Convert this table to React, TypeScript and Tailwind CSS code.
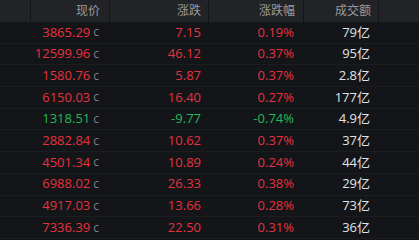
const rows = [
  { price: "3865.29", chg: "7.15", pct: "0.19%", vol: "79亿", up: true },
  { price: "12599.96", chg: "46.12", pct: "0.37%", vol: "95亿", up: true },
  { price: "1580.76", chg: "5.87", pct: "0.37%", vol: "2.8亿", up: true },
  { price: "6150.03", chg: "16.40", pct: "0.27%", vol: "177亿", up: true },
  { price: "1318.51", chg: "-9.77", pct: "-0.74%", vol: "4.9亿", up: false },
  { price: "2882.84", chg: "10.62", pct: "0.37%", vol: "37亿", up: true },
  { price: "4501.34", chg: "10.89", pct: "0.24%", vol: "44亿", up: true },
  { price: "6988.02", chg: "26.33", pct: "0.38%", vol: "29亿", up: true },
  { price: "4917.03", chg: "13.66", pct: "0.28%", vol: "73亿", up: true },
  { price: "7336.39", chg: "22.50", pct: "0.31%", vol: "36亿", up: true },
];

const cols = "grid grid-cols-[30px_79px_99px_95px_75px_1fr]";

export default function App() {
  return (
    <div
      className="w-[419px] h-[240px] overflow-hidden bg-[#131519] text-[13px]"
      style={{ fontFamily: '"Open Sans", "Noto Sans CJK SC", sans-serif' }}
    >
      {/* Header */}
      <div className={`${cols} h-[22px] bg-[#222327] text-[12px] text-[#9a9b9f]`}>
        <div />
        <div className="flex items-center justify-end pr-[9px] border-l border-[#141518]">现价</div>
        <div className="flex items-center justify-end pr-[7px] border-l border-[#141518]">涨跌</div>
        <div className="flex items-center justify-end pr-[8px] border-l border-[#141518]">涨跌幅</div>
        <div className="flex items-center justify-end pr-[7px] border-l border-[#141518]">成交额</div>
        <div className="border-l border-[#141518]" />
      </div>

      {/* Rows */}
      {rows.map((r, i) => {
        const color = r.up ? "text-[#e6323e]" : "text-[#25b85a]";
        return (
          <div key={i} className={`${cols} h-[21.7px] border-b border-[#1b1d21]`}>
            <div />
            <div className="flex items-center justify-end pr-[10px]">
              <span className={color}>{r.price}</span>
              <span className="ml-[3px] text-[12px] text-[#7d7f84]">c</span>
            </div>
            <div className={`flex items-center justify-end pr-[7px] ${color}`}>{r.chg}</div>
            <div className={`flex items-center justify-end pr-[9px] ${color}`}>{r.pct}</div>
            <div className="flex items-center justify-end pr-[8px] text-[#e2e3e6]">{r.vol}</div>
            <div />
          </div>
        );
      })}
    </div>
  );
}
